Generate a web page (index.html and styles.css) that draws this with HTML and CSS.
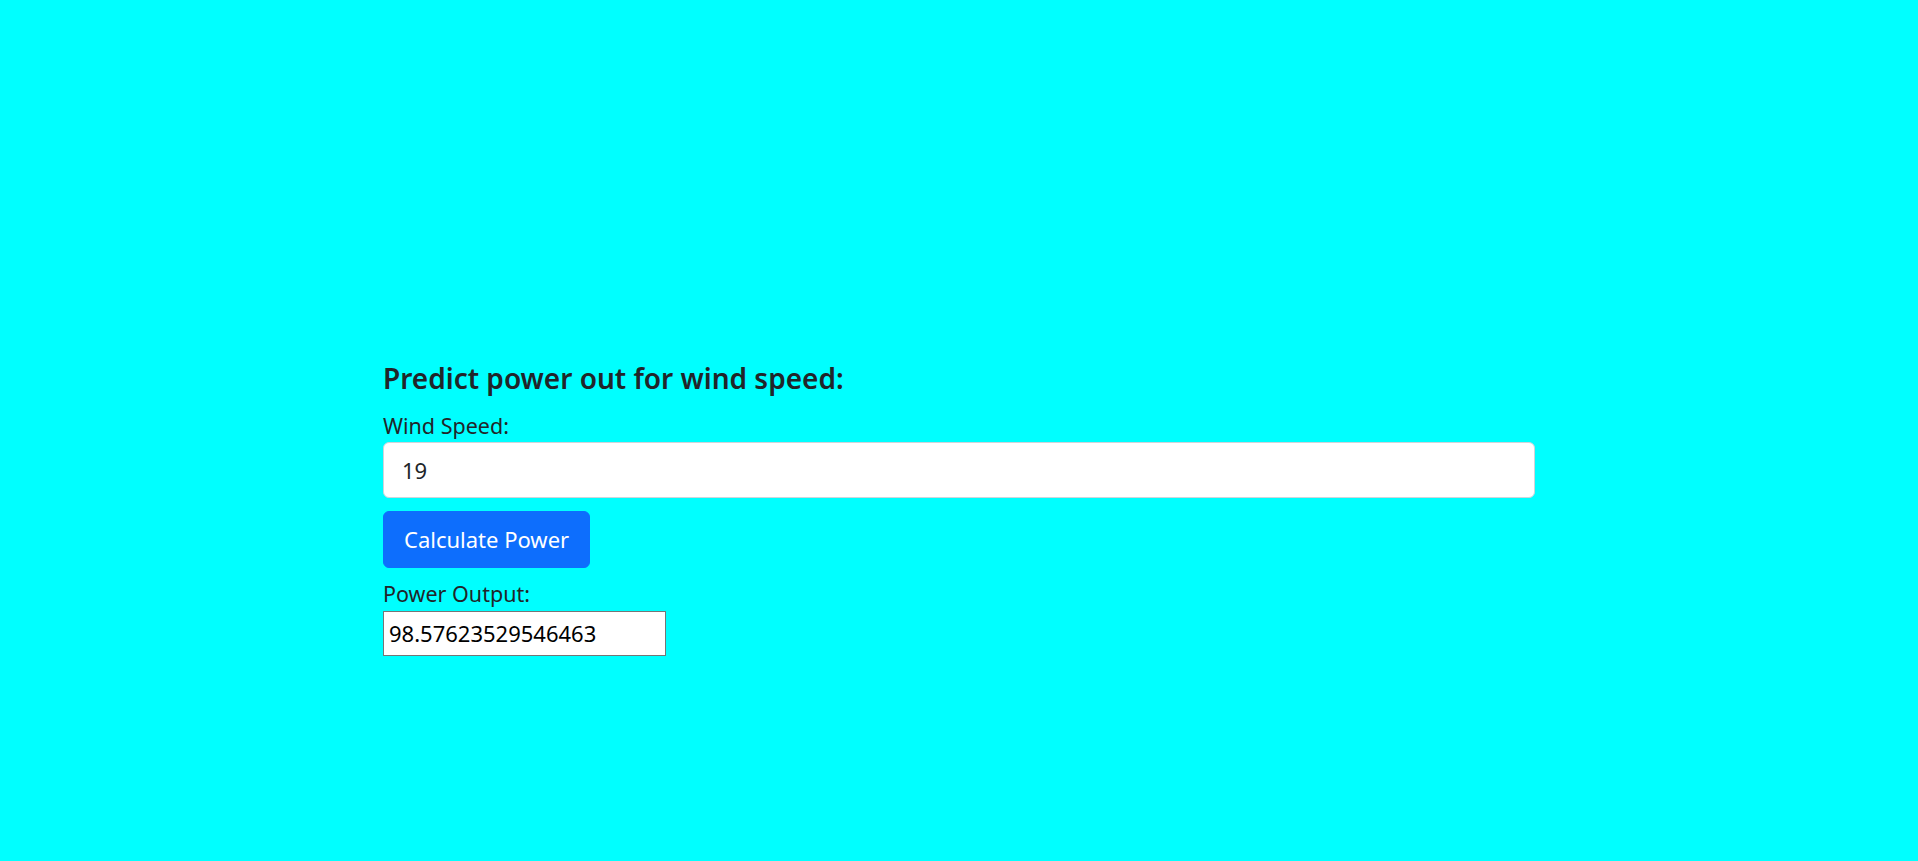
FILE: index.html
```html
<!DOCTYPE html>
<html lang="en">
<head>
<meta charset="utf-8">
<title>Wind Power Prediction</title>
<link rel="stylesheet" href="styles.css">
</head>
<body>
<div class="container">
  <h2 class="title">Predict power out for wind speed:</h2>
  <label class="label" for="speed">Wind Speed:</label>
  <input class="field" id="speed" type="text" value="19">
  <button class="btn" type="button">Calculate Power</button>
  <label class="label label-out" for="out">Power Output:</label>
  <input class="output" id="out" type="text" value="98.57623529546463">
</div>
</body>
</html>
```
FILE: styles.css
```css
html, body {
  margin: 0;
  padding: 0;
  background: #00ffff;
  height: 100%;
}
body {
  font-family: "Noto Sans", "Open Sans", sans-serif;
  color: #212529;
}
.container {
  width: 1152px;
  margin: 0 auto;
  padding-top: 362px;
  display: flex;
  flex-direction: column;
  align-items: flex-start;
}
.title {
  margin: 0;
  font-size: 28px;
  font-weight: 600;
  line-height: 1.2;
}
.label {
  display: block;
  margin-top: 14px;
  font-size: 21.5px;
  line-height: 32px;
}
.field {
  box-sizing: border-box;
  margin-top: 0;
  width: 100%;
  height: 56px;
  padding: 0 18px;
  border: 1px solid #ced4da;
  border-radius: 6px;
  background: #fff;
  font-family: inherit;
  font-size: 22px;
  color: #212529;
}
.btn {
  box-sizing: border-box;
  margin-top: 13px;
  height: 57px;
  padding: 0 20px;
  border: 1px solid #0d6efd;
  border-radius: 6px;
  background: #0d6efd;
  color: #fff;
  font-family: inherit;
  font-size: 22px;
}
.label-out {
  margin-top: 10px;
}
.output {
  box-sizing: border-box;
  margin-top: 1px;
  width: 283px;
  height: 45px;
  padding: 0 5px;
  border: 1px solid #767676;
  border-radius: 0;
  background: #fff;
  font-family: inherit;
  font-size: 22px;
  color: #000;
}
```
